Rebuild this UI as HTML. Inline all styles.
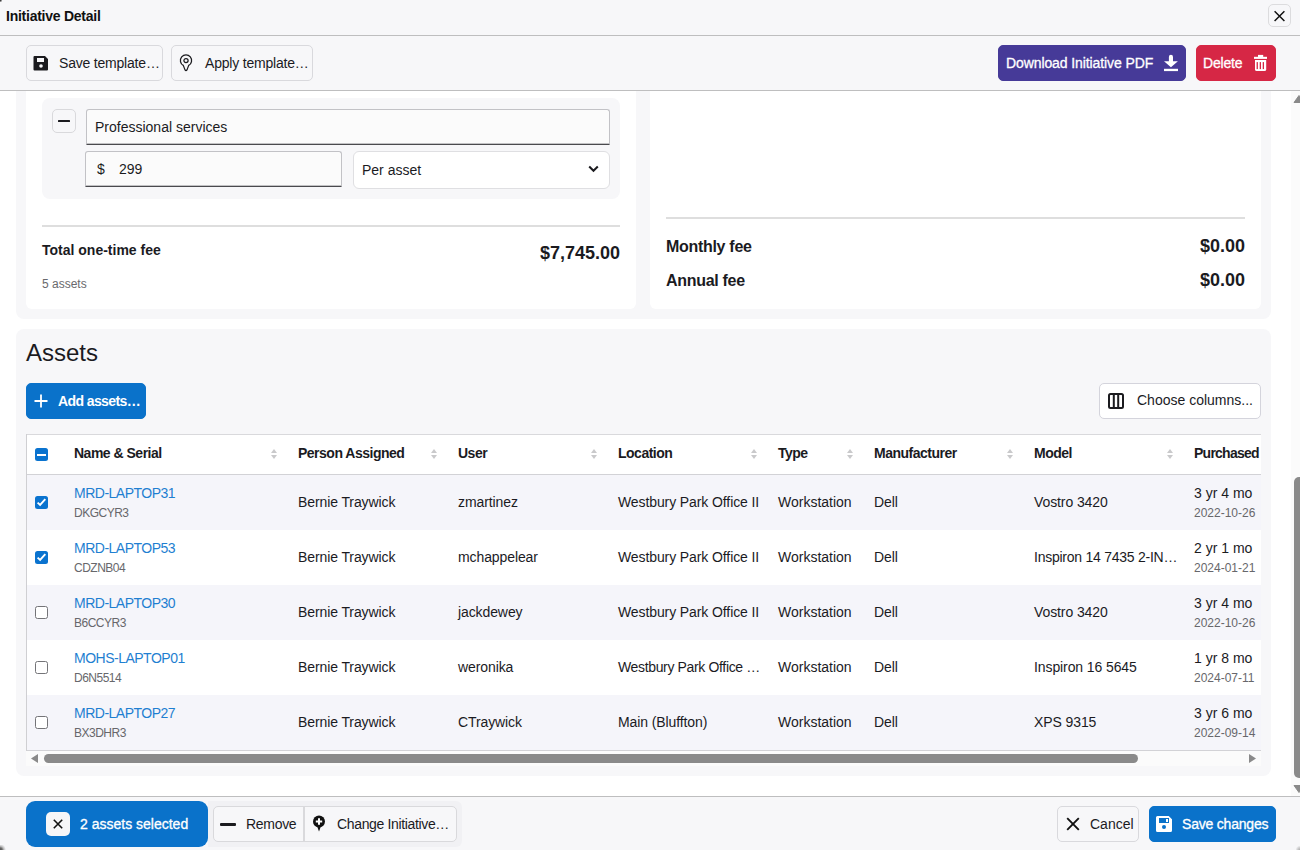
<!DOCTYPE html>
<html><head><meta charset="utf-8">
<style>
*{box-sizing:border-box;margin:0;padding:0}
html,body{width:1300px;height:850px;overflow:hidden;background:#fff;font-family:"Liberation Sans",sans-serif;color:#1b1b1f;font-size:14px}
.abs{position:absolute}
#hdr{left:0;top:0;width:1300px;height:36px;background:#f7f7f9;border-bottom:1px solid #bebebf}
#hdr .t{left:6px;top:8px;font-weight:bold;font-size:14px;color:#111;letter-spacing:-0.25px}
#close{left:1268px;top:4px;width:23px;height:23px;border:1px solid #dcdcde;border-radius:5px;background:#f7f7f9}
#tb{left:0;top:36px;width:1300px;height:55px;background:#f7f7f9;border-bottom:1px solid #bebebf}
.btn{position:absolute;height:35px;border:1px solid #d9d9dd;border-radius:5px;background:#f7f7f9;font-size:14px;color:#1b1b1f;white-space:nowrap}
.btn span{position:absolute;top:9px}
.btn svg{position:absolute}
.tx{position:absolute;white-space:nowrap;font-size:14px;line-height:normal}
.inp{border:1px solid #c2c2c6;border-bottom:1px solid #4a4a4e;box-shadow:inset 0 -0.6px 0 #8a8a8e;border-radius:3px 3px 1px 1px;background:#fbfbfb}
.sec{position:absolute;background:#f7f7f9;border-radius:8px}
.card{position:absolute;background:#fff;border-radius:6px}
#foot{left:0;top:796px;width:1300px;height:54px;background:#f7f7f9;border-top:1px solid #bebebf}
.cbx{position:absolute;width:13px;height:13px;border-radius:2.5px}
.cbx.on{background:#0a73cf}
.cbx.off{background:#fff;border:1.5px solid #747478}
.med{-webkit-text-stroke:0.3px currentColor}
</style></head><body>
<div id="content" class="abs" style="left:0;top:0;width:1300px;height:796px;overflow:hidden;background:#fff">
  <!-- fees section -->
  <div class="sec" style="left:16px;top:40px;width:1255px;height:279px"></div>
  <div class="card" style="left:26px;top:50px;width:610px;height:259px"></div>
  <div class="card" style="left:650px;top:50px;width:611px;height:259px"></div>
  <div class="abs" style="left:42px;top:98px;width:578px;height:101px;background:#f7f7f9;border-radius:8px"></div>
  <div class="abs" style="left:52px;top:109px;width:24px;height:24px;border:1px solid #d9d9dc;border-radius:5px;background:#f7f7f9"><div class="abs" style="left:4.8px;top:10.2px;width:12.3px;height:1.8px;background:#1b1b1f;border-radius:0.5px"></div></div>
  <div class="abs inp" style="left:86px;top:109px;width:524px;height:36px"></div>
  <div class="abs tx" style="left:95px;top:119px">Professional services</div>
  <div class="abs inp" style="left:85px;top:151px;width:257px;height:36px"></div>
  <div class="abs tx" style="left:97px;top:161px">$</div>
  <div class="abs tx" style="left:119px;top:161px">299</div>
  <div class="abs" style="left:353px;top:151px;width:257px;height:38px;border:1px solid #dfdfe2;border-radius:6px;background:#fff"></div>
  <div class="abs tx" style="left:362px;top:162px">Per asset</div>
  <svg class="abs" style="left:588px;top:165px" width="11" height="8" viewBox="0 0 11 8"><path d="M1.2 1.5L5.5 5.8L9.8 1.5" fill="none" stroke="#1b1b1f" stroke-width="2"/></svg>
  <div class="abs" style="left:42px;top:225px;width:578px;height:2px;background:#dedede"></div>
  <div class="abs tx" style="left:42px;top:242px;font-weight:bold">Total one-time fee</div>
  <div class="abs tx" style="left:420px;width:200px;text-align:right;top:243px;font-weight:bold;font-size:18px">$7,745.00</div>
  <div class="abs tx" style="left:42px;top:277px;font-size:12px;color:#69696d">5 assets</div>
  <div class="abs" style="left:666px;top:217px;width:579px;height:2px;background:#dedede"></div>
  <div class="abs tx" style="left:666px;top:237.6px;font-weight:bold;font-size:16px;letter-spacing:-0.3px">Monthly fee</div>
  <div class="abs tx" style="left:666px;top:271.6px;font-weight:bold;font-size:16px;letter-spacing:-0.3px">Annual fee</div>
  <div class="abs tx" style="left:1045px;width:200px;text-align:right;top:235.5px;font-weight:bold;font-size:18px">$0.00</div>
  <div class="abs tx" style="left:1045px;width:200px;text-align:right;top:269.6px;font-weight:bold;font-size:18px">$0.00</div>

  <!-- assets section -->
  <div class="sec" style="left:16px;top:329px;width:1255px;height:447px"></div>
  <div class="abs tx" style="left:26px;top:339px;font-size:24px;color:#1b1b1f">Assets</div>
  <div class="btn" style="left:26px;top:383px;width:120px;height:36px;background:#0a72ca;border-color:#0a72ca;color:#fff">
    <svg width="14" height="14" viewBox="0 0 14 14" style="left:7px;top:10px"><path d="M7 0.5v13M0.5 7h13" stroke="#fff" stroke-width="1.8"/></svg>
    <span style="left:31px;top:9px;font-weight:bold;letter-spacing:-0.6px">Add assets…</span>
  </div>
  <div class="btn" style="left:1099px;top:383px;width:162px;height:36px;background:#fff;border-color:#d4d4dc">
    <svg width="16" height="16" viewBox="0 0 16 16" style="left:8px;top:9px"><rect x="1" y="1" width="14" height="14" rx="1.5" fill="none" stroke="#1b1b1f" stroke-width="2"/><path d="M5.8 1v14M10.2 1v14" stroke="#1b1b1f" stroke-width="2"/></svg>
    <span style="left:37px;top:8px">Choose columns...</span>
  </div>
  <div id="tbl" class="abs" style="left:26px;top:434px;width:1235px;height:332px;overflow:hidden;background:#fbfbfb">
<div class="abs" style="left:0;top:0;width:1235px;height:41px;background:#fff;border-top:1px solid #d9d9dc;border-bottom:1px solid #d2d2d6"></div>
<div class="abs cbx on" style="left:9px;top:14px"><div class="abs" style="left:2px;top:5.5px;width:9px;height:2px;background:#fff"></div></div>
<div class="tx" style="left:48px;top:11.1px;font-weight:bold;color:#1b1b1f;letter-spacing:-0.5px">Name &amp; Serial</div>
<svg class="abs" style="left:245px;top:15px" width="6" height="10" viewBox="0 0 6 10"><path d="M3 0L6 4H0z M0 6H6L3 10z" fill="#c9c9cb"/></svg>
<div class="tx" style="left:272px;top:11.1px;font-weight:bold;color:#1b1b1f;letter-spacing:-0.5px">Person Assigned</div>
<svg class="abs" style="left:405px;top:15px" width="6" height="10" viewBox="0 0 6 10"><path d="M3 0L6 4H0z M0 6H6L3 10z" fill="#c9c9cb"/></svg>
<div class="tx" style="left:432px;top:11.1px;font-weight:bold;color:#1b1b1f;letter-spacing:-0.5px">User</div>
<svg class="abs" style="left:565px;top:15px" width="6" height="10" viewBox="0 0 6 10"><path d="M3 0L6 4H0z M0 6H6L3 10z" fill="#c9c9cb"/></svg>
<div class="tx" style="left:592px;top:11.1px;font-weight:bold;color:#1b1b1f;letter-spacing:-0.5px">Location</div>
<svg class="abs" style="left:725px;top:15px" width="6" height="10" viewBox="0 0 6 10"><path d="M3 0L6 4H0z M0 6H6L3 10z" fill="#c9c9cb"/></svg>
<div class="tx" style="left:752px;top:11.1px;font-weight:bold;color:#1b1b1f;letter-spacing:-0.5px">Type</div>
<svg class="abs" style="left:821px;top:15px" width="6" height="10" viewBox="0 0 6 10"><path d="M3 0L6 4H0z M0 6H6L3 10z" fill="#c9c9cb"/></svg>
<div class="tx" style="left:848px;top:11.1px;font-weight:bold;color:#1b1b1f;letter-spacing:-0.5px">Manufacturer</div>
<svg class="abs" style="left:981px;top:15px" width="6" height="10" viewBox="0 0 6 10"><path d="M3 0L6 4H0z M0 6H6L3 10z" fill="#c9c9cb"/></svg>
<div class="tx" style="left:1008px;top:11.1px;font-weight:bold;color:#1b1b1f;letter-spacing:-0.5px">Model</div>
<svg class="abs" style="left:1141px;top:15px" width="6" height="10" viewBox="0 0 6 10"><path d="M3 0L6 4H0z M0 6H6L3 10z" fill="#c9c9cb"/></svg>
<div class="tx" style="left:1168px;top:11.1px;font-weight:bold;color:#1b1b1f;letter-spacing:-0.75px">Purchased</div>
<div class="abs" style="left:0;top:41px;width:1235px;height:55px;background:#f5f5fa"></div>
<div class="abs cbx on" style="left:9px;top:62px"><svg class="abs" style="left:0;top:0" width="13" height="13" viewBox="0 0 13 13"><path d="M2.6 6.6L5.1 9L10.3 3.1" fill="none" stroke="#fff" stroke-width="1.9"/></svg></div>
<div class="tx" style="left:48px;top:51.3px;color:#1f7fd1;letter-spacing:-0.5px">MRD-LAPTOP31</div>
<div class="tx" style="left:48px;top:71.7px;font-size:12px;color:#67676b;letter-spacing:-0.5px">DKGCYR3</div>
<div class="tx" style="left:272px;top:60.3px;color:#1b1b1f;letter-spacing:-0.1px">Bernie Traywick</div>
<div class="tx" style="left:432px;top:60.3px;color:#1b1b1f;letter-spacing:-0.1px">zmartinez</div>
<div class="tx" style="left:592px;top:60.3px;color:#1b1b1f;letter-spacing:-0.1px">Westbury Park Office II</div>
<div class="tx" style="left:752px;top:60.3px;color:#1b1b1f;letter-spacing:0px">Workstation</div>
<div class="tx" style="left:848px;top:60.3px;color:#1b1b1f;letter-spacing:-0.1px">Dell</div>
<div class="tx" style="left:1008px;top:60.3px;color:#1b1b1f;letter-spacing:-0.1px">Vostro 3420</div>
<div class="tx" style="left:1168px;top:51.3px;color:#1b1b1f">3 yr 4 mo</div>
<div class="tx" style="left:1168px;top:71.7px;font-size:12px;color:#67676b">2022-10-26</div>
<div class="abs" style="left:0;top:96px;width:1235px;height:55px;background:#fff"></div>
<div class="abs cbx on" style="left:9px;top:117px"><svg class="abs" style="left:0;top:0" width="13" height="13" viewBox="0 0 13 13"><path d="M2.6 6.6L5.1 9L10.3 3.1" fill="none" stroke="#fff" stroke-width="1.9"/></svg></div>
<div class="tx" style="left:48px;top:106.3px;color:#1f7fd1;letter-spacing:-0.5px">MRD-LAPTOP53</div>
<div class="tx" style="left:48px;top:126.7px;font-size:12px;color:#67676b;letter-spacing:-0.5px">CDZNB04</div>
<div class="tx" style="left:272px;top:115.3px;color:#1b1b1f;letter-spacing:-0.1px">Bernie Traywick</div>
<div class="tx" style="left:432px;top:115.3px;color:#1b1b1f;letter-spacing:-0.1px">mchappelear</div>
<div class="tx" style="left:592px;top:115.3px;color:#1b1b1f;letter-spacing:-0.1px">Westbury Park Office II</div>
<div class="tx" style="left:752px;top:115.3px;color:#1b1b1f;letter-spacing:0px">Workstation</div>
<div class="tx" style="left:848px;top:115.3px;color:#1b1b1f;letter-spacing:-0.1px">Dell</div>
<div class="tx" style="left:1008px;top:115.3px;color:#1b1b1f;letter-spacing:-0.25px">Inspiron 14 7435 2-IN…</div>
<div class="tx" style="left:1168px;top:106.3px;color:#1b1b1f">2 yr 1 mo</div>
<div class="tx" style="left:1168px;top:126.7px;font-size:12px;color:#67676b">2024-01-21</div>
<div class="abs" style="left:0;top:151px;width:1235px;height:55px;background:#f5f5fa"></div>
<div class="abs cbx off" style="left:9px;top:172px"></div>
<div class="tx" style="left:48px;top:161.3px;color:#1f7fd1;letter-spacing:-0.5px">MRD-LAPTOP30</div>
<div class="tx" style="left:48px;top:181.7px;font-size:12px;color:#67676b;letter-spacing:-0.5px">B6CCYR3</div>
<div class="tx" style="left:272px;top:170.3px;color:#1b1b1f;letter-spacing:-0.1px">Bernie Traywick</div>
<div class="tx" style="left:432px;top:170.3px;color:#1b1b1f;letter-spacing:-0.1px">jackdewey</div>
<div class="tx" style="left:592px;top:170.3px;color:#1b1b1f;letter-spacing:-0.1px">Westbury Park Office II</div>
<div class="tx" style="left:752px;top:170.3px;color:#1b1b1f;letter-spacing:0px">Workstation</div>
<div class="tx" style="left:848px;top:170.3px;color:#1b1b1f;letter-spacing:-0.1px">Dell</div>
<div class="tx" style="left:1008px;top:170.3px;color:#1b1b1f;letter-spacing:-0.1px">Vostro 3420</div>
<div class="tx" style="left:1168px;top:161.3px;color:#1b1b1f">3 yr 4 mo</div>
<div class="tx" style="left:1168px;top:181.7px;font-size:12px;color:#67676b">2022-10-26</div>
<div class="abs" style="left:0;top:206px;width:1235px;height:55px;background:#fff"></div>
<div class="abs cbx off" style="left:9px;top:227px"></div>
<div class="tx" style="left:48px;top:216.3px;color:#1f7fd1;letter-spacing:-0.5px">MOHS-LAPTOP01</div>
<div class="tx" style="left:48px;top:236.7px;font-size:12px;color:#67676b;letter-spacing:-0.5px">D6N5514</div>
<div class="tx" style="left:272px;top:225.3px;color:#1b1b1f;letter-spacing:-0.1px">Bernie Traywick</div>
<div class="tx" style="left:432px;top:225.3px;color:#1b1b1f;letter-spacing:-0.1px">weronika</div>
<div class="tx" style="left:592px;top:225.3px;color:#1b1b1f;letter-spacing:-0.35px">Westbury Park Office …</div>
<div class="tx" style="left:752px;top:225.3px;color:#1b1b1f;letter-spacing:0px">Workstation</div>
<div class="tx" style="left:848px;top:225.3px;color:#1b1b1f;letter-spacing:-0.1px">Dell</div>
<div class="tx" style="left:1008px;top:225.3px;color:#1b1b1f;letter-spacing:-0.1px">Inspiron 16 5645</div>
<div class="tx" style="left:1168px;top:216.3px;color:#1b1b1f">1 yr 8 mo</div>
<div class="tx" style="left:1168px;top:236.7px;font-size:12px;color:#67676b">2024-07-11</div>
<div class="abs" style="left:0;top:261px;width:1235px;height:55px;background:#f5f5fa"></div>
<div class="abs cbx off" style="left:9px;top:282px"></div>
<div class="tx" style="left:48px;top:271.3px;color:#1f7fd1;letter-spacing:-0.5px">MRD-LAPTOP27</div>
<div class="tx" style="left:48px;top:291.7px;font-size:12px;color:#67676b;letter-spacing:-0.5px">BX3DHR3</div>
<div class="tx" style="left:272px;top:280.3px;color:#1b1b1f;letter-spacing:-0.1px">Bernie Traywick</div>
<div class="tx" style="left:432px;top:280.3px;color:#1b1b1f;letter-spacing:-0.1px">CTraywick</div>
<div class="tx" style="left:592px;top:280.3px;color:#1b1b1f;letter-spacing:-0.1px">Main (Bluffton)</div>
<div class="tx" style="left:752px;top:280.3px;color:#1b1b1f;letter-spacing:0px">Workstation</div>
<div class="tx" style="left:848px;top:280.3px;color:#1b1b1f;letter-spacing:-0.1px">Dell</div>
<div class="tx" style="left:1008px;top:280.3px;color:#1b1b1f;letter-spacing:-0.1px">XPS 9315</div>
<div class="tx" style="left:1168px;top:271.3px;color:#1b1b1f">3 yr 6 mo</div>
<div class="tx" style="left:1168px;top:291.7px;font-size:12px;color:#67676b">2022-09-14</div>
<div class="abs" style="left:0;top:316px;width:1235px;height:1px;background:#d2d2d6"></div>
<div class="abs" style="left:0;top:317px;width:1235px;height:15px;background:#fbfbfb"></div>
<div class="abs" style="left:18px;top:320px;width:1094px;height:9px;background:#8a8a8a;border-radius:4.5px"></div>
<svg class="abs" style="left:5px;top:320px" width="7" height="9" viewBox="0 0 7 9"><path d="M7 0V9L0 4.5z" fill="#8a8a8a"/></svg>
<svg class="abs" style="left:1223px;top:320px" width="7" height="9" viewBox="0 0 7 9"><path d="M0 0V9L7 4.5z" fill="#8a8a8a"/></svg>
<div class="abs" style="left:0;top:0;width:1px;height:317px;background:#cfcfd2"></div>
<!--tblend-->
  </div>
</div>

<div class="abs" style="left:1291px;top:91px;width:9px;height:705px;background:#fbfbfb"></div>
<svg class="abs" style="left:1293px;top:95px" width="7" height="8" viewBox="0 0 7 8"><path d="M6 0.5L11 7.5H1z" fill="#8a8a8a" stroke="#8a8a8a" stroke-width="1" stroke-linejoin="round"/></svg>
<div class="abs" style="left:1294px;top:477px;width:12px;height:301px;background:#8a8a8a;border-radius:5px"></div>
<svg class="abs" style="left:1293px;top:785px" width="7" height="8" viewBox="0 0 7 8"><path d="M1 0.5H11L6 7.5z" fill="#8a8a8a" stroke="#8a8a8a" stroke-width="1" stroke-linejoin="round"/></svg>
<div id="hdr" class="abs">
  <div class="t abs">Initiative Detail</div>
  <div id="close" class="abs">
    <svg width="23" height="23" viewBox="0 0 23 23" style="position:absolute;left:-1px;top:-1px"><path d="M6.6 7.2L16.4 17M16.4 7.2L6.6 17" stroke="#111" stroke-width="1.5"/></svg>
  </div>
</div>
<div id="tb" class="abs">
  <div class="btn" style="left:26px;top:9px;width:137px;height:36px">
    <svg width="16" height="16" viewBox="0 0 16 16" style="left:6px;top:9px"><path d="M1.5 1h10.5l3 3v10.5a1 1 0 0 1-1 1h-12.5a1 1 0 0 1-1-1v-12.5a1 1 0 0 1 1-1z" fill="#1b1b1f"/><rect x="4" y="3" width="7" height="4" fill="#f7f7f9"/><circle cx="8" cy="11" r="1.8" fill="#f7f7f9"/></svg>
    <span style="left:32px;letter-spacing:-0.2px">Save template…</span>
  </div>
  <div class="btn" style="left:171px;top:9px;width:142px;height:36px">
    <svg width="14" height="18" viewBox="0 0 14 18" style="left:7px;top:8px"><path d="M4.3 11.4A5.6 5.6 0 1 1 9.7 11.4L8 15.9Q7 17.2 6 15.9Z" fill="none" stroke="#1b1b1f" stroke-width="1.25" stroke-linejoin="round"/><circle cx="7" cy="6.6" r="2.1" fill="none" stroke="#1b1b1f" stroke-width="1.25"/></svg>
    <span style="left:33px;letter-spacing:-0.2px">Apply template…</span>
  </div>
  <div class="btn" style="left:998px;top:9px;width:188px;height:36px;background:#463a98;border-color:#463a98;color:#fff">
    <span class="med" style="left:7px;letter-spacing:-0.1px">Download Initiative PDF</span>
    <svg width="22" height="22" viewBox="0 0 22 22" style="left:161px;top:6px"><path d="M8.9 4.9a2.05 2.05 0 0 1 4.1 0V9.2H17.9L10.95 15.2L4 9.2H8.9z" fill="#fff"/><rect x="4" y="16.8" width="14" height="2.3" fill="#fff"/></svg>
  </div>
  <div class="btn" style="left:1196px;top:9px;width:80px;height:36px;background:#d62745;border-color:#d62745;color:#fff">
    <span class="med" style="left:6px;letter-spacing:-0.2px">Delete</span>
    <svg width="22" height="22" viewBox="0 0 22 22" style="left:53px;top:6px"><rect x="8" y="2.9" width="5.2" height="2.2" fill="#fff"/><rect x="4" y="4.8" width="13" height="2.1" fill="#fff"/><path d="M5 8H16.2V17.4a1.7 1.7 0 0 1-1.7 1.7H6.7a1.7 1.7 0 0 1-1.7-1.7z" fill="#fff"/><rect x="6.6" y="10.1" width="1.3" height="7" fill="#d62745"/><rect x="9.7" y="10.1" width="1.3" height="7" fill="#d62745"/><rect x="12.7" y="10.1" width="1.3" height="7" fill="#d62745"/></svg>
  </div>
</div>



<div id="foot" class="abs">
  <div class="abs" style="left:26px;top:4px;width:182px;height:46px;background:#0a72ca;border-radius:9px"></div>
  <div class="abs" style="left:46px;top:15px;width:24px;height:24px;background:#f6f6f8;border-radius:5px">
    <svg class="abs" style="left:0;top:0" width="24" height="24" viewBox="0 0 24 24"><path d="M7.8 7.8L16.2 16.2M16.2 7.8L7.8 16.2" stroke="#111" stroke-width="1.6"/></svg>
  </div>
  <div class="tx med" style="left:80px;top:19px;color:#fff">2 assets selected</div>
  <div class="abs" style="left:208px;top:4px;width:254px;height:46px;background:#f1f1f4;border-radius:0 6px 6px 0"></div>
  <div class="abs" style="left:213px;top:9px;width:244px;height:36px;border:1px solid #d9d9dc;border-radius:5px;background:#f7f7f9"></div>
  <div class="abs" style="left:303px;top:10px;width:1.5px;height:34px;background:#d9d9dc"></div>
  <div class="abs" style="left:220px;top:26px;width:16px;height:2.5px;background:#1b1b1f;border-radius:1px"></div>
  <div class="tx" style="left:246px;top:19px;letter-spacing:-0.3px">Remove</div>
  <svg class="abs" style="left:312px;top:18px" width="14" height="18" viewBox="0 0 14 18"><circle cx="7" cy="6.5" r="6" fill="#111"/><path d="M5 11h4l-2 5.5z" fill="#111"/><path d="M7 3.3v6.4M3.8 6.5h6.4" stroke="#fff" stroke-width="2"/></svg>
  <div class="tx" style="left:337px;top:19px;letter-spacing:-0.35px">Change Initiative…</div>
  <div class="btn" style="left:1057px;top:9px;width:82px;height:36px;background:#f7f7f9">
    <svg width="14" height="14" viewBox="0 0 14 14" style="left:8px;top:10px"><path d="M1.2 1.2L12.8 12.8M12.8 1.2L1.2 12.8" stroke="#111" stroke-width="1.9"/></svg>
    <span style="left:32px;top:9px">Cancel</span>
  </div>
  <div class="btn" style="left:1149px;top:9px;width:127px;height:36px;background:#0a72ca;border-color:#0a72ca;color:#fff">
    <svg width="16" height="16" viewBox="0 0 16 16" style="left:6px;top:9px"><path d="M1.5 0h11.2L16 3.3V14.5a1.5 1.5 0 0 1-1.5 1.5H1.5A1.5 1.5 0 0 1 0 14.5V1.5A1.5 1.5 0 0 1 1.5 0z" fill="#fff"/><rect x="3" y="2" width="10" height="5" fill="#0a72ca"/><rect x="10" y="3" width="2" height="3" fill="#fff"/><circle cx="8" cy="11" r="2" fill="#0a72ca"/></svg>
    <span class="med" style="left:32px;top:9px;letter-spacing:-0.2px">Save changes</span>
  </div>
</div>
<div class="abs" style="left:0;top:0;width:2px;height:2px;background:radial-gradient(circle at 0 0,#333 0,#444 1px,rgba(80,80,80,0.3) 2px)"></div>
<div class="abs" style="left:0;top:845px;width:6px;height:5px;background:radial-gradient(circle at 0 100%, #555 0, #666 2px, rgba(120,120,120,0.4) 4px, rgba(247,247,249,0) 6px)"></div>
<div class="abs" style="left:1295px;top:846px;width:5px;height:4px;background:radial-gradient(circle at 100% 100%, #aaa 0, rgba(170,170,170,0.5) 2.5px, rgba(247,247,249,0) 4.5px)"></div>
</body></html>
